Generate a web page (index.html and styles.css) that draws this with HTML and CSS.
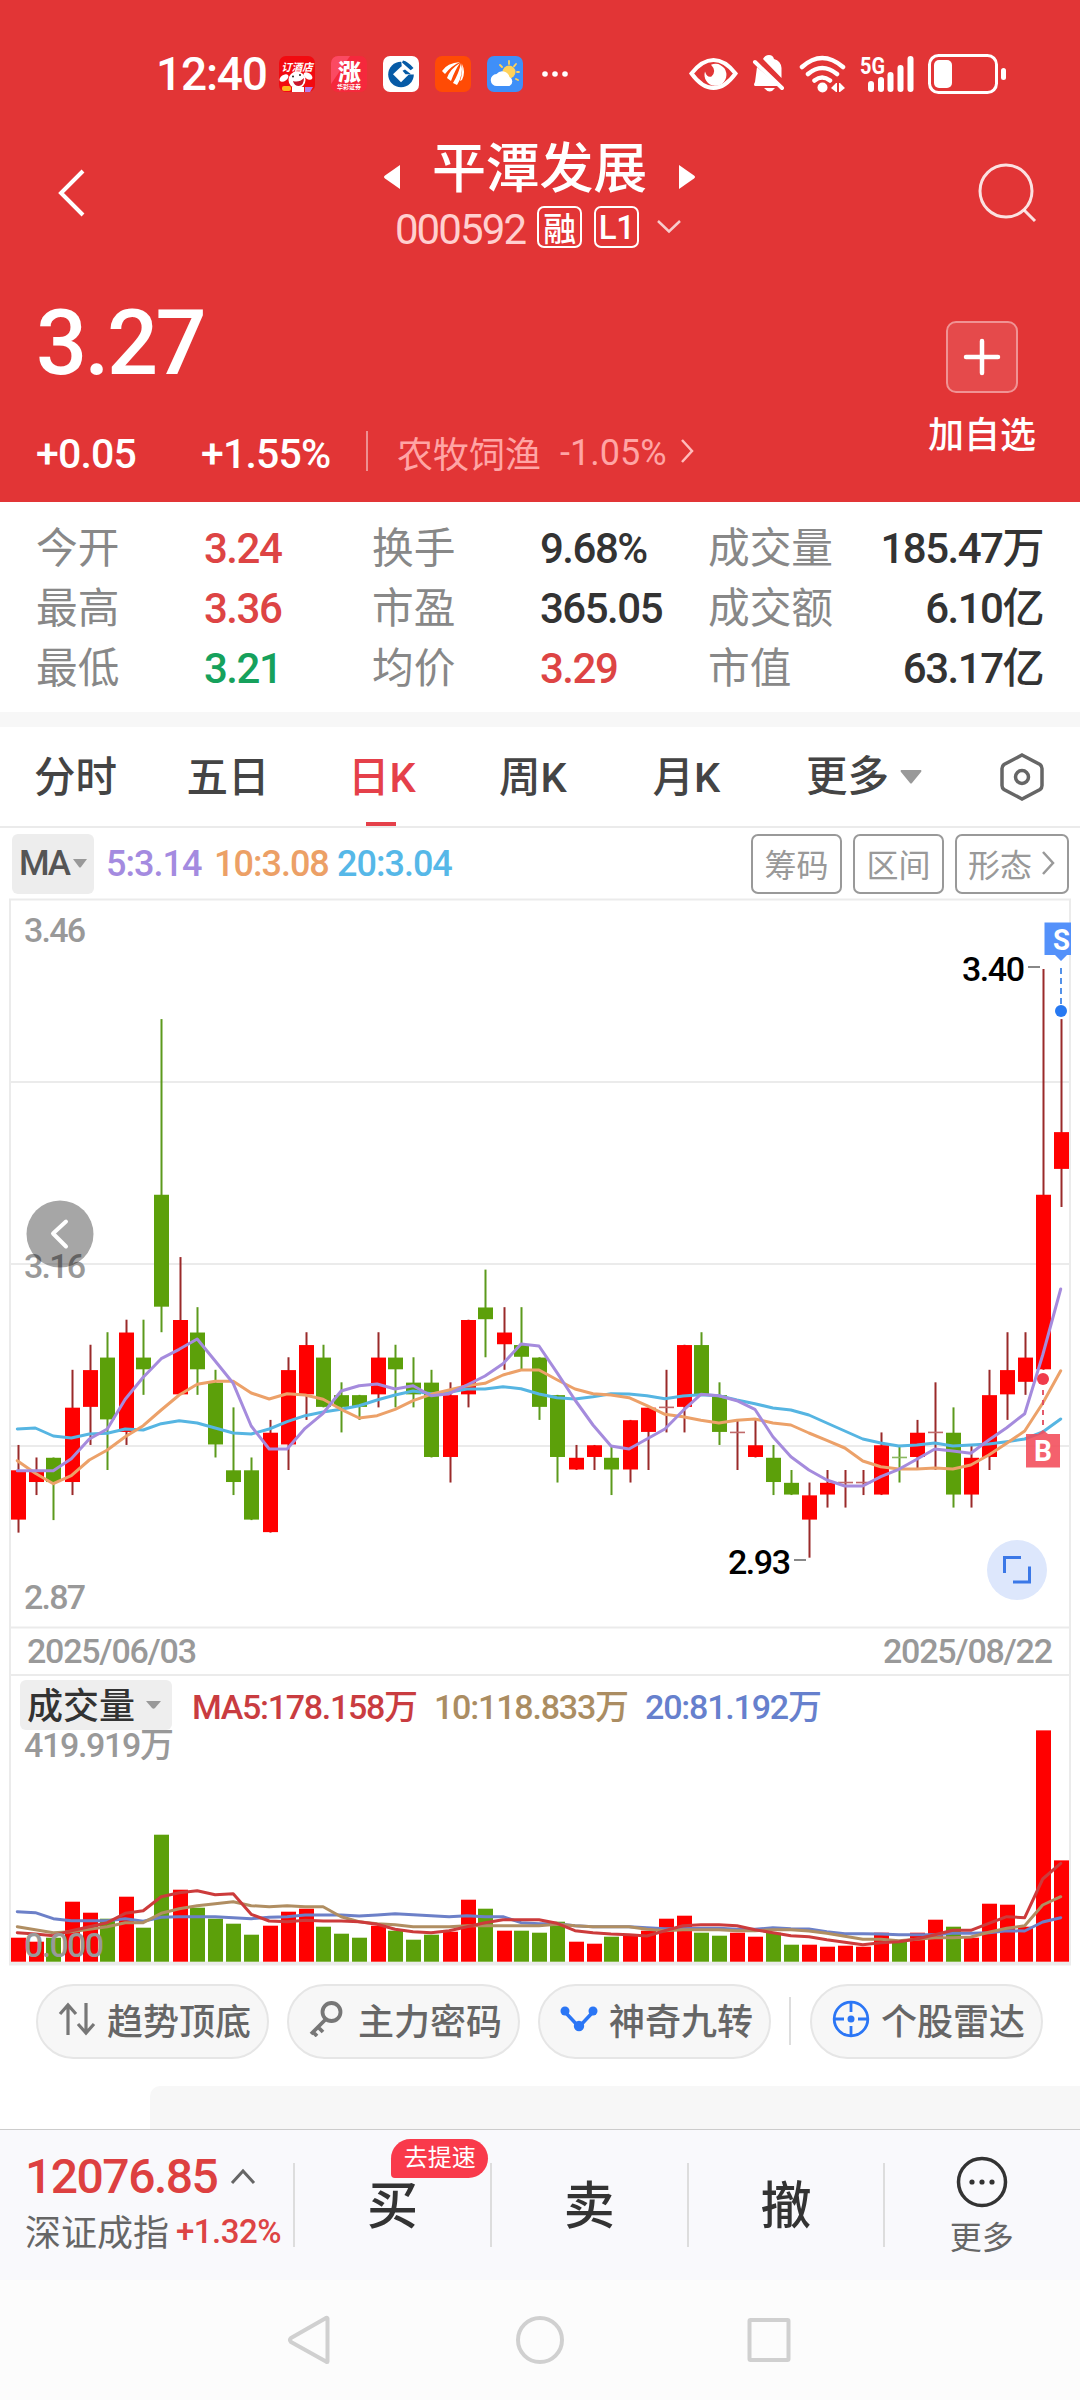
FILE: index.html
```html
<!DOCTYPE html>
<html lang="zh-CN">
<head>
<meta charset="utf-8">
<meta name="viewport" content="width=1080">
<title>平潭发展 000592</title>
<link rel="stylesheet" href="styles.css">
</head>
<body>
<div class="screen">
  <header class="header">
    <div class="status">
      <span class="clock">12:40</span>
      <div class="apps">
        <svg width="36" height="36" viewBox="0 0 36 36"><rect width="36" height="36" rx="7" fill="#f20a10"/><text x="18" y="15" font-size="10.500" font-weight="700" font-style="italic" text-anchor="middle" fill="#fff">订酒店</text><ellipse cx="5" cy="22" rx="5" ry="3" fill="#fff" transform="rotate(-35 5 22)"/><ellipse cx="29" cy="20" rx="5" ry="3" fill="#fff" transform="rotate(35 29 20)"/><circle cx="18" cy="24" r="8.500" fill="#fff"/><path d="M14 25q6 2 11-3 0 7-5 8-5 0-6-5z" fill="#c8182b"/><circle cx="14" cy="20.500" r="1" fill="#222"/><circle cx="21" cy="19" r="1" fill="#222"/><rect x="3" y="30" width="9" height="5" rx="2" fill="#ffb21c"/><path d="M13 31h12v5H13z" fill="#fff"/><path d="M26 31h8l-3 5h-5z" fill="#b77bea"/></svg>
        <svg width="36" height="36" viewBox="0 0 36 36"><rect width="36" height="36" rx="7" fill="#f5283c"/><path d="M0 7a7 7 0 0 1 7-7h12L0 28z" fill="#fb4a62"/><text x="18.500" y="24" font-size="23" font-weight="900" text-anchor="middle" fill="#fff">涨</text><text x="18" y="33" font-size="6" font-weight="700" text-anchor="middle" fill="#fff">华彩证券</text></svg>
        <svg width="36" height="36" viewBox="0 0 36 36"><rect width="36" height="36" rx="7" fill="#fff"/><circle cx="18" cy="18.500" r="12.800" fill="#065aa6"/><path d="M18 3h14v15.500H24l-5-6z" fill="#fff"/><path d="M18.500 10.200L26.300 18 18 26.300 10 18.200z" fill="#fff"/><path d="M20 4.500q5 1 10.500 7.500l-2.800 2.300L19 6.500zM22 13.500l6 4.800h-5.500l-3-3.500z" fill="#065aa6"/></svg>
        <svg width="36" height="36" viewBox="0 0 36 36"><rect width="36" height="36" rx="7" fill="#ff4b05"/><path d="M7 15Q12 7 25 6Q16 10 10 18zM12 22Q15 13 25 7Q20 14 16 25zM18 27Q24 17 26 7Q29 18 22 29zM25 25Q28 17 27 8Q31 16 27 24z" fill="#fff"/></svg>
        <svg width="36" height="36" viewBox="0 0 36 36"><rect width="36" height="36" rx="7" fill="#3f8ff8"/><circle cx="22" cy="16" r="6.500" fill="#ffd25a"/><path d="M22 5v3M29 8l-2 2.300M32 16h-2M13 9l2 2M29 23l2 1" stroke="#ffd25a" stroke-width="1.800" stroke-linecap="round"/><path d="M10 30a6 6 0 0 1-.5-12 7.500 7.500 0 0 1 13 3 5 5 0 0 1 0 9z" fill="#fff"/></svg>
      </div>
      <svg class="dots" width="26" height="8" viewBox="0 0 26 8"><circle cx="3" cy="4" r="2.800" fill="#fff"/><circle cx="13" cy="4" r="2.800" fill="#fff"/><circle cx="23" cy="4" r="2.800" fill="#fff"/></svg>
      <svg class="sys" width="320" height="42" viewBox="688 52 320 42" fill="#fff">
        <path d="M691.500 72.500Q702 59 713.500 59T735.500 72.500Q725 87 713.500 87T691.500 72.500z" fill="none" stroke="#fff" stroke-width="4"/>
        <path d="M711 63.800Q717 70 711.500 75.500Q707 77 705 70.500A11 11 0 1 0 711 63.800z"/>
        <path d="M763 58q2-4 6-4 4 0 5 4 7 2 7.500 9v10zM757 66l22 19h-24q-2-1 0-4z"/><path d="M755 61l27 26" stroke="#fff" stroke-width="4" stroke-linecap="round"/><path d="M764 87h11q-5 7-11 0z"/>
        <g fill="none" stroke="#fff" stroke-width="4.500" stroke-linecap="round"><path d="M802 66Q822 48 843 66M808 73Q822 61 837 73M814.500 79.500Q822 73.500 830 79.500"/></g><circle cx="822.500" cy="86.500" r="5"/><path d="M831 87l5-5v9zM845 87l-5-5v9zM836 82h1v9h-1zM839 82h1v9h-1z"/>
        <text x="860" y="73" font-size="24" font-weight="700" textLength="25" lengthAdjust="spacingAndGlyphs">5G</text>
        <rect x="868" y="80" width="6" height="11" rx="3"/><rect x="878" y="76" width="6" height="15" rx="3"/><rect x="887.500" y="71" width="6" height="20" rx="3"/><rect x="897.500" y="64" width="6" height="27" rx="3"/><rect x="907.500" y="55" width="6" height="36" rx="3"/>
        <rect x="929.500" y="54.500" width="67" height="37" rx="9" fill="none" stroke="#fff" stroke-width="3"/><rect x="934" y="59" width="18" height="28" rx="5"/><rect x="1001" y="67" width="5" height="12" rx="2.500"/>
      </svg>
    </div>

    <div class="titlebar">
      <svg class="back" width="32" height="52" viewBox="0 0 32 52"><path d="M28 4L6 26l22 22" fill="none" stroke="#fff" stroke-width="4"/></svg>
      <div class="titles">
        <div class="name-row">
          <svg width="20" height="28" viewBox="0 0 20 28"><path d="M18 2v24L3 15.500q-2-1.500 0-3z" fill="#fff"/></svg>
          <h1 class="name">平潭发展</h1>
          <svg width="20" height="28" viewBox="0 0 20 28"><path d="M2 2v24l15-10.500q2-1.500 0-3z" fill="#fff"/></svg>
        </div>
        <div class="code-row">
          <span class="code">000592</span><span class="tag">融</span><span class="tag">L1</span>
          <svg width="26" height="16" viewBox="0 0 26 16"><path d="M2 2l11 10.500L24 2" fill="none" stroke="#fff" stroke-opacity=".75" stroke-width="2.500"/></svg>
        </div>
      </div>
      <svg class="search" width="62" height="62" viewBox="0 0 62 62"><circle cx="29" cy="29" r="26" fill="none" stroke="#fff" stroke-opacity=".85" stroke-width="3"/><path d="M47 48l11 11" stroke="#fff" stroke-opacity=".85" stroke-width="3"/></svg>
    </div>

    <div class="quote">
      <div class="quote-main">
        <div class="price">3.27</div>
        <div class="change">
          <span class="delta">+0.05</span><span class="pct">+1.55%</span><i class="bar"></i>
          <span class="sector">农牧饲渔</span><span class="sector-pct">-1.05%</span>
          <svg width="16" height="26" viewBox="0 0 16 26"><path d="M3 2l10 11L3 24" fill="none" stroke="#fbb" stroke-width="2.500"/></svg>
        </div>
      </div>
      <div class="add">
        <div class="add-btn"><svg width="38" height="38" viewBox="0 0 38 38"><path d="M19 3v32M3 19h32" stroke="#fff" stroke-width="4.500" stroke-linecap="round"/></svg></div>
        <span>加自选</span>
      </div>
    </div>
  </header>

  <section class="stats">
    <span>今开</span><b class="up">3.24</b><span>换手</span><b>9.68%</b><span>成交量</span><b class="end">185.47万</b>
    <span>最高</span><b class="up">3.36</b><span>市盈</span><b>365.05</b><span>成交额</span><b class="end">6.10亿</b>
    <span>最低</span><b class="down">3.21</b><span>均价</span><b class="up">3.29</b><span>市值</span><b class="end">63.17亿</b>
  </section>

  <nav class="tabs">
    <span>分时</span><span>五日</span><span class="active">日K</span><span>周K</span><span>月K</span>
    <span class="more">更多<svg width="22" height="14" viewBox="0 0 22 14"><path d="M1 0h20q1 1 0 2L12 13q-1 1-2 0L1 2q-1-1 0-2z" fill="#999"/></svg></span>
    <svg class="hex" width="48" height="50" viewBox="0 0 48 50"><path d="M24 3l18 9.500q2 1.500 2 4v17q0 2.500-2 4L24 47 6 37.500q-2-1.500-2-4v-17q0-2.500 2-4z" fill="none" stroke="#666" stroke-width="3.500"/><circle cx="24" cy="25" r="6.500" fill="none" stroke="#666" stroke-width="3.500"/></svg>
  </nav>

  <div class="toolbar">
    <div class="ma-select">MA<svg width="14" height="9" viewBox="0 0 14 9"><path d="M0 0h14L8 8q-1 1-2 0z" fill="#999"/></svg></div>
    <span class="ma ma5">5:3.14</span><span class="ma ma10">10:3.08</span><span class="ma ma20">20:3.04</span>
    <div class="tools">
      <span class="tool">筹码</span><span class="tool">区间</span>
      <span class="tool wide">形态<svg width="16" height="26" viewBox="0 0 16 26"><path d="M3 2l10 11L3 24" fill="none" stroke="#999" stroke-width="2.500"/></svg></span>
    </div>
  </div>

  <svg class="chart" id="chart" width="1080" height="1068" viewBox="0 898 1080 1068">
    <g class="grid">
      <path d="M9 899.500H1071M10 899V1965M1070 899V1965M10 1082H1070M10 1264H1070M10 1446H1070M10 1627.500H1070M10 1675H1070"/>
      <path d="M9 1963.500H1071" stroke-width="4"/>
    </g>
    <g id="candles"></g>
    <g id="volumes"></g>
    <g class="lines" id="lines"></g>

    <g class="axis">
      <text x="24" y="942" textLength="62">3.46</text>
      <text x="24" y="1278" textLength="62">3.16</text>
      <text x="24" y="1609" textLength="62">2.87</text>
      <text x="27" y="1663" textLength="170">2025/06/03</text>
      <text x="883" y="1663" textLength="170">2025/08/22</text>
      <text x="24" y="1757" textLength="150">419.919万</text>
      <text x="24" y="1957" textLength="80">0.000</text>
    </g>
    <g class="extreme">
      <text x="962" y="981" textLength="63">3.40</text><path d="M1028 967h12"/>
      <text x="728" y="1574" textLength="63">2.93</text><path d="M794 1560h12"/>
    </g>

    <rect x="20" y="1680" width="152" height="50" rx="6" fill="#eee"/>
    <text class="vol-name" x="27" y="1719" textLength="108">成交量</text>
    <path d="M146 1701h15l-6 7q-1.500 1.500-3 0z" fill="#999"/>
    <g class="vol-ma">
      <text x="192" y="1718.500" textLength="226" fill="#c93c40">MA5:178.158万</text>
      <text x="434" y="1718.500" textLength="195" fill="#ab8d62">10:118.833万</text>
      <text x="645" y="1718.500" textLength="177" fill="#6680cd">20:81.192万</text>
    </g>

    <path d="M1044.500 922.500H1071V955H1067l-6 6-6-6h-10.500z" fill="#5491fa"/>
    <text x="1053" y="949.500" font-size="30" font-weight="700" fill="#fff" textLength="17" lengthAdjust="spacingAndGlyphs">S</text>
    <path d="M1061 968V1006" stroke="#5491e8" stroke-width="2" stroke-dasharray="6 4"/>
    <circle cx="1061" cy="1011" r="6" fill="#2779f2"/>
    <circle cx="1043" cy="1379" r="6" fill="#f03b4b"/>
    <path d="M1043 1390V1428" stroke="#e04a5c" stroke-width="1.800" stroke-dasharray="5 5"/>
    <path d="M1026 1434h12l5-4 5 4h12v33.500h-34z" fill="#f24b59" fill-opacity=".88"/>
    <text x="1034" y="1461" font-size="29" font-weight="700" fill="#fff" textLength="18" lengthAdjust="spacingAndGlyphs">B</text>

    <circle cx="60" cy="1234" r="33.500" fill="#000" fill-opacity=".35"/>
    <path d="M66 1221.500L53 1233.500 66 1246.500" fill="none" stroke="#fff" stroke-width="4" stroke-linecap="round" stroke-linejoin="round"/>
    <circle cx="1017" cy="1570" r="30" fill="#dde7fc"/>
    <path d="M1004.500 1573v-15.500H1021M1029.500 1566.500V1582H1013" fill="none" stroke="#3b78e7" stroke-width="3"/>
  </svg>

  <div class="chips">
    <div class="chip"><svg width="38" height="34" viewBox="0 0 38 34"><g fill="none" stroke="#777" stroke-width="3.200"><path d="M10 33V4M2 12l8-9 8 9M28 1v29M20 22l8 9 8-9"/></g></svg>趋势顶底</div>
    <div class="chip"><svg width="34" height="36" viewBox="0 0 34 36"><g fill="none" stroke="#777" stroke-width="3.800"><circle cx="22.500" cy="11" r="9"/><path d="M17 18L2 33M9 26l5 5M4 31l4 4"/></g></svg>主力密码</div>
    <div class="chip"><svg width="38" height="26" viewBox="0 0 38 26"><path d="M5 6l14 15L33 6" fill="none" stroke="#2b76f5" stroke-width="3.500"/><circle cx="5" cy="5" r="4.500" fill="#2b76f5"/><circle cx="33" cy="5" r="4.500" fill="#2b76f5"/><circle cx="19" cy="20" r="5.200" fill="#2b76f5"/></svg>神奇九转</div>
    <i class="chip-sep"></i>
    <div class="chip"><svg width="38" height="38" viewBox="0 0 38 38"><g fill="none" stroke="#2b76f5" stroke-width="2.800"><circle cx="19" cy="19" r="16.800"/><path d="M19 2v10M19 26v10M2 19h10M26 19h10"/></g><circle cx="19" cy="19" r="3.500" fill="#2b76f5"/></svg>个股雷达</div>
  </div>
  <div class="next-card"></div>

  <footer class="trade">
    <div class="index">
      <div class="index-top"><span>12076.85</span><svg width="26" height="18" viewBox="0 0 26 18"><path d="M2 16L13 4l11 12" fill="none" stroke="#666" stroke-width="3"/></svg></div>
      <div class="index-sub">深证成指<span>+1.32%</span></div>
    </div>
    <div class="action">买<em class="badge">去提速</em></div>
    <div class="action">卖</div>
    <div class="action">撤</div>
    <div class="action more-action">
      <svg width="54" height="54" viewBox="0 0 54 54"><circle cx="27" cy="27" r="23.500" fill="none" stroke="#333" stroke-width="3.500"/><circle cx="17" cy="27" r="2.600" fill="#333"/><circle cx="27" cy="27" r="2.600" fill="#333"/><circle cx="37" cy="27" r="2.600" fill="#333"/></svg>
      <span>更多</span>
    </div>
  </footer>
  <div class="sysnav">
    <svg width="520" height="60" viewBox="280 2310 520 60" fill="none" stroke="#d0d0d0" stroke-width="4" stroke-linejoin="round"><path d="M327.500 2318.500v43q0 1-1.500 0L291 2342q-2-2 0-4l35-20q1.500-.5 1.500.5z"/><circle cx="540" cy="2340" r="22"/><rect x="749.500" y="2320" width="39" height="40" rx="1"/></svg>
  </div>
</div>
<script src="chart.js"></script>
</body>
</html>
```
FILE: styles.css
```css
* { box-sizing: border-box; }
body {
  margin: 0;
  background: #fff;
  font-family: Roboto, "Noto Sans CJK SC", sans-serif;
  color: #333;
}
svg { display: block; flex: none; }
i, em, b { font-style: normal; font-weight: inherit; }
.screen { width: 1080px; height: 2400px; display: flex; flex-direction: column; overflow: hidden; }
.screen > * { flex: none; }

.header { height: 502px; background: #e23536; color: #fff; }
.status { height: 146px; padding: 2px 72px 0 156px; display: flex; align-items: center; }
.clock { width: 123px; font-size: 46px; font-weight: 500; letter-spacing: -1.2px; line-height: 54px; white-space: nowrap; }
.apps { display: flex; gap: 16px; }
.dots { margin-left: 19px; }
.sys { margin-left: auto; }

.titlebar { height: 114px; display: flex; align-items: flex-start; padding: 0 41px 0 55px; }
.back { margin-top: 21px; }
.titles { flex: 1; display: flex; flex-direction: column; align-items: center; }
.name-row { display: flex; align-items: center; gap: 30px; height: 60px; margin-top: -6px; margin-left: 15px; }
.name-row svg { margin-top: 14px; }
.name { margin: 0; font-size: 54px; font-weight: 500; line-height: 60px; letter-spacing: -.3px; }
.code-row { display: flex; align-items: center; height: 44px; margin-top: 5px; margin-left: 13px; }
.code { font-size: 42px; letter-spacing: -1.9px; color: #ffcfcf; margin-right: 12px; padding-top: 4px; }
.tag { width: 45px; height: 42px; margin-right: 12px; border: 2px solid #fff; border-radius: 7px; display: flex; align-items: center; justify-content: center; font-size: 33px; font-weight: 500; letter-spacing: -.5px; }
.code-row svg { margin-left: 5px; }
.search { margin-top: 16px; }

.quote { display: flex; justify-content: space-between; padding: 0 39px 0 36px; }
.price { margin-top: 36px; font-size: 90px; font-weight: 500; line-height: 96px; letter-spacing: -2.6px; }
.change { display: flex; align-items: center; height: 50px; margin-top: 34px; white-space: nowrap; }
.delta, .pct { font-size: 41px; font-weight: 500; letter-spacing: -.8px; width: 165px; padding-top: 5px; }
.bar { width: 2px; height: 40px; margin-right: 29px; background: #ee9091; }
.sector { width: 163px; font-size: 36px; padding-top: 1px; color: #ffa5a5; }
.sector-pct { width: 119px; font-size: 36px; padding-top: 3px; letter-spacing: 0; color: #ffa5a5; }
.add { width: 116px; display: flex; flex-direction: column; align-items: center; font-size: 36px; font-weight: 500; line-height: 50px; padding-top: 61px; }
.add-btn { width: 72px; height: 72px; margin: 0 3px 18px 0; border: 2px solid #f09394; border-radius: 10px; background: #e54a4b; display: flex; align-items: center; justify-content: center; }
.add span { margin-right: 2px; }

.stats { height: 225px; padding: 17px 37px 0 36px; border-bottom: 15px solid #f7f7f7; display: grid; grid-template-columns: 168px 168px 168px 168px 140px 1fr; grid-auto-rows: 60px; font-size: 41.7px; line-height: 60px; white-space: nowrap; }
.stats span { color: #888; }
.stats b { color: #333; font-weight: 500; letter-spacing: -1.5px; font-size: 42px; }
.stats .up { color: #dd4444; }
.stats .down { color: #16a15c; }
.stats .end { text-align: right; }

.tabs { height: 101px; padding: 0 34px; border-bottom: 2px solid #ebebeb; display: flex; align-items: center; font-size: 41.5px; font-weight: 500; color: #444; white-space: nowrap; }
.tabs span { line-height: 102px; height: 99px; }
.tabs span:nth-child(1) { width: 153px; }
.tabs span:nth-child(2) { width: 162px; }
.tabs span:nth-child(4) { margin-left: 79px; width: 154px; }
.tabs span:nth-child(5) { width: 154px; }
.tabs .active { width: 72px; color: #e5404a; background: linear-gradient(#e5404a, #e5404a) 18px 95px / 30px 4px no-repeat; }
.tabs .more { display: flex; align-items: center; gap: 11px; }
.hex { margin-left: 76px; }

.toolbar { height: 70px; padding: 1px 11px 0 12px; display: flex; align-items: center; font-size: 36px; }
.ma-select { width: 82px; height: 60px; border-radius: 6px; background: #ededed; color: #555; display: flex; align-items: center; justify-content: center; gap: 4px; font-size: 35px; font-weight: 500; letter-spacing: -2px; }
.ma { letter-spacing: -1px; font-size: 36px; font-weight: 500; white-space: nowrap; }
.ma5 { width: 108px; margin-left: 12px; color: #a48be0; }
.ma10 { width: 123px; color: #eca066; }
.ma20 { color: #56b8e8; }
.tools { display: flex; gap: 11px; margin-left: auto; }
.tool { width: 91px; height: 60px; border: 2px solid #999; border-radius: 7px; color: #999; font-size: 32px; display: flex; align-items: center; justify-content: center; padding-bottom: 2px; }
.tool.wide { width: 114px; gap: 8px; }

.chart { font-family: Roboto, "Noto Sans CJK SC", sans-serif; font-weight: 500; }
.grid { fill: none; stroke: #ebebeb; stroke-width: 2; }
.axis text { font-size: 34px; fill: #999; font-weight: 500; }
.extreme text { font-size: 34px; fill: #000; }
.extreme path { stroke: #888; stroke-width: 2; }
.vol-name { font-size: 36px; fill: #333; }
.vol-ma text { font-size: 34px; }
.lines polyline { fill: none; stroke-width: 3; stroke-linejoin: round; stroke-linecap: round; }
.candle-up { fill: #f00; }
.candle-down { fill: #5ca00a; }
.wick-up { fill: #9a2a2a; }
.wick-down { fill: #5c9a1c; }
.doji-up { fill: #c06a6a; }
.doji-down { fill: #8cb860; }

.chips { height: 102px; margin-top: 18px; padding-left: 36px; display: flex; font-size: 36px; color: #666; }
.chip { width: 233px; height: 75px; margin-right: 18px; border: 2px solid #e6e6e6; border-radius: 38px; background: #f7f7f7; display: flex; align-items: center; justify-content: space-between; padding: 0 16px 5px 20px; white-space: nowrap; font-weight: 500; }
.chip-sep { width: 2px; height: 48px; margin: 13px 19px 0 0; background: #ddd; }
.next-card { height: 43px; margin-left: 150px; border-top-left-radius: 10px; background: #f7f7f7; }

.trade { height: 151px; border-top: 1px solid #ccc; background: #f9f9fc; display: flex; padding-top: 33px; }
.index { width: 294px; padding-left: 25px; height: 100px; }
.index-top { display: flex; align-items: center; gap: 13px; height: 46px; margin-top: -10px; font-size: 48px; letter-spacing: -1.5px; color: #dd4040; font-weight: 500; }
.index-sub { display: flex; align-items: center; height: 50px; margin-top: 6px; font-size: 36px; color: #666; white-space: nowrap; }
.index-sub span { margin: 3px 0 0 7px; font-size: 33px; font-weight: 500; letter-spacing: -.5px; color: #dd4444; }
.action { position: relative; width: 197.3px; height: 84px; border-left: 2px solid #ddd; display: flex; align-items: center; justify-content: center; font-size: 51px; font-weight: 500; line-height: 88px; color: #333; padding-top: 4px; }
.badge { position: absolute; left: 96px; top: -24px; width: 97px; height: 39px; border-radius: 20px 20px 20px 4px; background: #f93a4b; color: #fff; font-size: 24px; font-weight: 400; line-height: 39px; text-align: center; }
.more-action { flex-direction: column; font-size: 32px; font-weight: 400; line-height: 40px; color: #666; gap: 9px; padding: 2px 2px 0 0; }

.sysnav { height: 120px; background: #fcfcfc; display: flex; align-items: center; padding-left: 280px; }
```
FILE: chart.js
```js
// Each day: direction (R up, G down), high, body top, body bottom, low, in cents.
const days = `R302,300,296,295 R301,300,299,298 G301,301,299,296 R308,305,299,298 R310,308,305,302
G311,309,304,300 R312,311,303,302 G312,309,308,306 G336,322,313,311 R317,312,306,306
G313,311,308,306 G308,307,302,301 G305,300,299,298 G301,300,296,296 R304,303,295,295
R309,308,302,300 R311,310,306,304 G310,309,305,305 G307,306,305,303 G306,306,305,304
R311,309,306,305 G310,309,308,305 G309,307,306,305 G308,307,301,301 R307,306,301,299
R312,312,306,305 G316,313,312,309 R313,311,310,308 G313,310,309,308 G309,309,305,304
G306,306,301,299 R302,301,300,300 R302,302,301,300 G302,301,300,298 R304,304,300,299
R305,305,303,300 R308,305,305,303 R310,310,305,303 G311,310,306,306 G307,306,303,302
R304,303,303,300 R304,302,301,301 G302,301,299,298 G300,299,298,298 R299,298,296,293
R300,299,298,297 R300,299,299,297 R300,299,299,298 R303,302,298,298 G302,301,301,299
R304,303,301,300 R307,303,303,300 G305,303,298,297 R302,301,298,297 R308,306,301,300
R311,308,306,304 R311,309,307,306 R340,322,308,308 R336,327,324,321`.split(/\s+/);

// Volume bar heights in thirds of a pixel.
const volume = [72,60,72,180,147,129,195,102,381,216,162,129,114,81,108,150,159,105,84,72,108,93,66,81,90,186,159,93,93,87,
  120,60,54,75,81,93,129,138,87,78,87,75,87,51,51,45,48,45,87,60,87,126,105,72,174,171,105,694,304];

// Moving averages, offsets in thirds of a pixel from the given origin.
const averages = [
  { color: '#56b5e2', top: 1240, v: [567,564,588,594,582,580,567,570,551,542,549,564,579,582,567,545,527,516,508,497,480,465,453,461,457,447,447,440,446,462,473,477,470,461,462,467,476,468,464,467,480,491,504,510,525,549,573,597,609,618,615,609,618,615,612,605,597,576,537] },
  { color: '#eca169', top: 1240, v: [662,700,731,707,660,630,590,557,510,465,433,424,424,459,477,461,465,478,508,534,527,508,482,463,450,437,430,405,390,390,419,447,461,465,473,497,523,530,541,549,541,537,549,555,579,601,624,663,680,687,687,684,687,675,645,610,573,490,392] },
  { color: '#a58bdd', top: 1240, v: [692,692,692,656,597,567,478,412,356,328,297,363,430,558,627,627,565,520,453,437,432,447,437,467,461,435,408,371,312,318,398,480,555,618,627,597,567,512,463,467,482,508,590,650,690,720,738,738,710,688,658,627,633,640,600,563,521,345,147] },
  { color: '#6c80c8', top: 1640, v: [815,818,836,842,842,842,836,844,832,830,830,830,833,836,832,830,825,825,825,828,825,821,824,827,830,827,830,830,848,851,851,857,860,860,860,863,866,866,865,865,868,868,863,866,867,875,881,881,882,884,884,884,880,880,878,872,873,846,833] },
  { color: '#b08e62', top: 1640, v: [860,869,878,875,868,860,848,848,820,806,797,791,785,797,800,797,800,800,830,845,851,854,860,860,860,857,857,857,857,857,853,857,860,860,860,868,872,869,869,869,872,872,869,869,873,880,889,898,898,902,898,893,893,891,877,865,857,795,770] },
  { color: '#cc3b3b', top: 1640, v: [878,882,887,872,860,848,820,812,770,758,752,764,761,823,843,845,841,843,843,845,853,868,875,878,872,860,848,839,839,839,850,872,878,882,884,888,872,857,854,854,857,869,878,887,890,899,907,914,908,905,897,884,871,871,850,830,833,717,670] }
];

const NS = 'http://www.w3.org/2000/svg';
const x = i => 17.9 + i * 17.99;
const y = cents => 969 + (340 - cents) * 12.525;

function add(parent, tag, attrs) {
  const el = document.createElementNS(NS, tag);
  for (const k in attrs) el.setAttribute(k, attrs[k]);
  document.getElementById(parent).appendChild(el);
}
function box(parent, cls, left, top, width, height) {
  add(parent, 'rect', { class: cls, x: left, y: top, width, height });
}

days.forEach((d, i) => {
  const dir = d[0] === 'R' ? 'up' : 'down';
  const [high, top, bottom, low] = d.slice(1).split(',').map(Number);
  // Bodies sit on whole pixels; falling days are floored.
  const left = (dir === 'up' ? Math.round(x(i)) : Math.floor(x(i) - .3)) - 7;
  box('candles', 'wick-' + dir, left + 6.5, y(high), 2, y(low) - y(high));
  if (top === bottom) box('candles', 'doji-' + dir, left, y(top) - .8, 15, 1.6);
  else box('candles', 'candle-' + dir, left, y(top) + .3, 15, y(bottom) - y(top) - .8);
  box('volumes', 'candle-' + dir, left, 1961.7 - volume[i] / 3, 15, volume[i] / 3);
});
averages.forEach(a => add('lines', 'polyline', {
  stroke: a.color,
  points: a.v.map((v, i) => (x(i) - .6).toFixed(1) + ',' + (a.top + v / 3).toFixed(1)).join(' ')
}));
```
